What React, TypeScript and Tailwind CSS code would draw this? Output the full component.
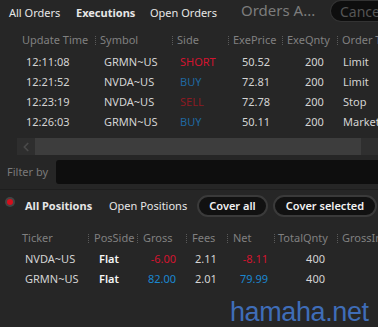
import { ChevronLeft } from 'lucide-react'

const font = { fontFamily: '"Noto Sans", "Open Sans", sans-serif' }

function Sep() {
  return <span className="h-[9px] border-l border-dotted border-[#5a5a5a] shrink-0" />
}

const execs = [
  { t: '12:11:08', s: 'GRMN~US', side: 'SHORT', c: 'text-[#d3142f]', p: '50.52', q: '200', o: 'Limit' },
  { t: '12:21:52', s: 'NVDA~US', side: 'BUY', c: 'text-[#1f68a0]', p: '72.81', q: '200', o: 'Limit' },
  { t: '12:23:19', s: 'NVDA~US', side: 'SELL', c: 'text-[#8c1a22]', p: '72.78', q: '200', o: 'Stop' },
  { t: '12:26:03', s: 'GRMN~US', side: 'BUY', c: 'text-[#1f68a0]', p: '50.11', q: '200', o: 'Market' },
]

const positions = [
  { t: 'NVDA~US', g: '-6.00', f: '2.11', n: '-8.11', c: 'text-[#d3142f]' },
  { t: 'GRMN~US', g: '82.00', f: '2.01', n: '79.99', c: 'text-[#1a86d0]' },
]

export default function App() {
  return (
    <div className="w-[378px] h-[327px] bg-[#262626] overflow-hidden relative text-[11px] text-[#d4d4d4]" style={font}>
      {/* tabs */}
      <div className="h-[26px] flex items-center whitespace-nowrap text-[#e6e6e6]">
        <span className="w-[76px] shrink-0 pl-[9px]">All Orders</span>
        <span className="w-[74px] shrink-0 font-bold">Executions</span>
        <span className="w-[91px] shrink-0">Open Orders</span>
        <span className="w-[89px] shrink-0 text-[15px] text-[#7c7c7c] -mt-[6px]">Orders A...</span>
        <span className="-mt-[4px] h-[22px] w-[60px] shrink-0 pl-[9px] flex items-center rounded-l-full bg-[#0e0e0e] border border-[#333] border-r-0 text-[14px] text-[#555]">Cancel</span>
      </div>

      {/* executions header */}
      <div className="h-[24px] flex items-center whitespace-nowrap text-[#808080] mt-[2px]">
        <span className="w-[95px] shrink-0 pl-[22px]">Update Time</span>
        <Sep />
        <span className="w-[76px] shrink-0 pl-[4px]">Symbol</span>
        <Sep />
        <span className="w-[55px] shrink-0 pl-[4px]">Side</span>
        <Sep />
        <span className="w-[53px] shrink-0 pl-[4px]">ExePrice</span>
        <Sep />
        <span className="w-[54px] shrink-0 pl-[4px]">ExeQnty</span>
        <Sep />
        <span className="pl-[4px]">Order Type</span>
      </div>

      <div className="flex flex-col">
        {execs.map((r) => (
          <div key={r.t} className="h-[20px] flex items-center whitespace-nowrap">
            <span className="w-[104px] shrink-0 pl-[26px]">{r.t}</span>
            <span className="w-[76px] shrink-0">{r.s}</span>
            <span className={`w-[62px] shrink-0 ${r.c}`}>{r.side}</span>
            <span className="w-[63px] shrink-0">{r.p}</span>
            <span className="w-[38px] shrink-0">{r.q}</span>
            <span>{r.o}</span>
          </div>
        ))}
      </div>

      {/* scrollbar */}
      <div className="mt-[6px] h-[17px] flex">
        <div className="w-[17px]" />
        <div className="w-[18px] bg-[#2e2e2e] flex items-center justify-center text-[#4a4a4a]">
          <ChevronLeft className="w-[14px] h-[14px]" strokeWidth={3} />
        </div>
        <div className="w-[326px] bg-[#3d3d3d]" />
        <div className="flex-1 bg-[#2f2f2f]" />
      </div>

      {/* filter */}
      <div className="mt-[5px] h-[24px] flex items-center">
        <span className="w-[56px] shrink-0 pl-[7px] text-[#7a7a7a]">Filter by</span>
        <div className="flex-1 h-full bg-[#0e0e0e] rounded-l-[3px]" />
      </div>

      <div className="mt-[5px] h-px bg-[#1e1e1e]" />

      {/* positions bar */}
      <div className="h-[32px] flex items-center whitespace-nowrap">
        <span className="ml-[7px] w-[6px] h-[6px] rounded-full bg-[#d40f1c] ring-2 ring-[#444] -mt-[8px] shrink-0" />
        <span className="w-[96px] shrink-0 pl-[12px] font-bold text-[#e6e6e6]">All Positions</span>
        <span className="w-[88px] shrink-0 text-[#e6e6e6]">Open Positions</span>
        <span className="w-[71px] h-[22px] flex items-center justify-center rounded-full bg-[#111] border-2 border-[#3a3a3a] text-[#f2f2f2] font-semibold shrink-0">Cover all</span>
        <span className="ml-[5px] w-[104px] h-[22px] flex items-center justify-center rounded-full bg-[#111] border-2 border-[#3a3a3a] text-[#f2f2f2] font-semibold shrink-0">Cover selected</span>
      </div>

      {/* positions header */}
      <div className="mt-[5px] h-[22px] flex items-center whitespace-nowrap text-[#808080]">
        <span className="w-[88px] shrink-0 pl-[22px]">Ticker</span>
        <Sep />
        <span className="w-[48px] shrink-0 pl-[5px]">PosSide</span>
        <Sep />
        <span className="w-[48px] shrink-0 pl-[5px]">Gross</span>
        <Sep />
        <span className="w-[40px] shrink-0 pl-[5px]">Fees</span>
        <Sep />
        <span className="w-[46px] shrink-0 pl-[5px]">Net</span>
        <Sep />
        <span className="w-[62px] shrink-0 pl-[3px]">TotalQnty</span>
        <Sep />
        <span className="pl-[4px]">GrossIn</span>
      </div>

      {positions.map((r) => (
        <div key={r.t} className="h-[20px] flex items-center whitespace-nowrap">
          <span className="w-[99px] shrink-0 pl-[25px]">{r.t}</span>
          <span className="w-[40px] shrink-0 font-semibold text-[#f5f5f5]">Flat</span>
          <span className={`w-[37px] shrink-0 text-right ${r.c}`}>{r.g}</span>
          <span className="w-[42px] shrink-0 pl-[19px]">{r.f}</span>
          <span className={`w-[50px] shrink-0 text-right ${r.c}`}>{r.n}</span>
          <span className="w-[57px] shrink-0 text-right">400</span>
        </div>
      ))}

      <div className="absolute left-[230px] top-[299px] text-[27px] leading-none tracking-[-0.4px] text-[#3f6db8]" style={{ fontFamily: '"Liberation Sans", Arial, sans-serif' }}>
        hamaha.net
      </div>
    </div>
  )
}
